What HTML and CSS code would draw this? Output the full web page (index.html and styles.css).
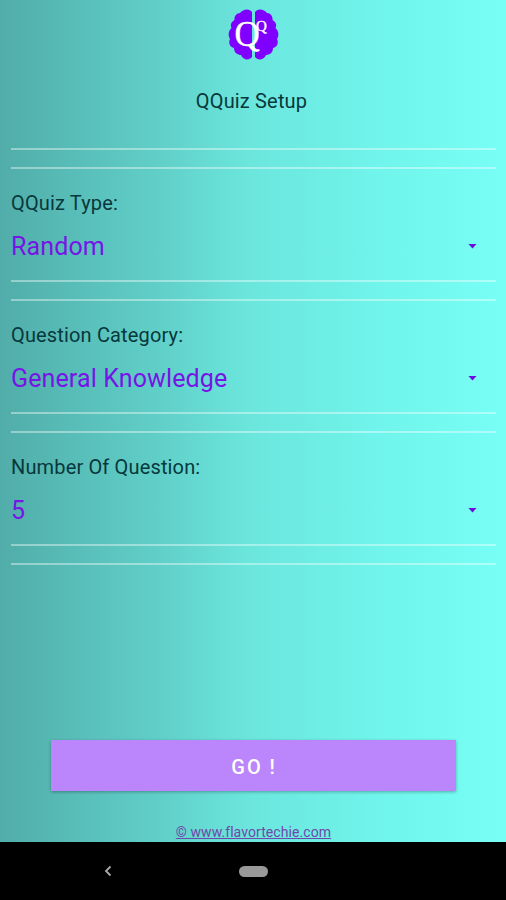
FILE: index.html
```
<!DOCTYPE html>
<html lang="en">
<head>
    <meta charset="UTF-8">
    <meta name="viewport" content="width=device-width, initial-scale=1.0">
    <title>QQuiz Setup</title>
    <link rel="stylesheet" href="styles.css">
</head>
<body>
    <div class="screen">
        <header class="header">
            <svg class="logo" viewBox="0 0 52 52">
                <g fill="#7f00ff">
                    <path d="M24 3 C21 -1 15 0 12 4 C8 4 6 8 6.500 11 C3 13 2 16 3.500 19 C0 22 0 27 2 30 C0 34 2 38 6 39 C6 44 10 46 13 46 C15 51 21 52 24 48 Z"/>
                    <path d="M27 3 C30 -1 36 0 39 4 C43 4 45 8 44.500 11 C48 13 49 16 47.500 19 C51 22 51 27 49 30 C51 34 49 38 45 39 C45 44 41 46 38 46 C36 51 30 52 27 48 Z"/>
                </g>
                <text class="logo-big" x="6.500" y="37">Q</text>
                <text class="logo-small" x="28" y="21.500">Q</text>
            </svg>
            <h1 class="title">QQuiz Setup</h1>
        </header>

        <main class="form">
            <div class="divider"></div>
            <div class="field">
                <div class="label">QQuiz Type:</div>
                <div class="select"><span>Random</span><i class="arrow"></i></div>
            </div>
            <div class="divider"></div>
            <div class="field">
                <div class="label">Question Category:</div>
                <div class="select"><span>General Knowledge</span><i class="arrow"></i></div>
            </div>
            <div class="divider"></div>
            <div class="field">
                <div class="label">Number Of Question:</div>
                <div class="select"><span>5</span><i class="arrow"></i></div>
            </div>
            <div class="divider"></div>
        </main>

        <button class="go-btn">GO !</button>
        <footer class="footer"><a href="#">© www.flavortechie.com</a></footer>
    </div>

    <nav class="navbar">
        <svg class="back" viewBox="0 0 8 12"><path d="M6.500 1.500 L2 6 L6.500 10.500"/></svg>
        <div class="home"></div>
    </nav>
</body>
</html>
```
FILE: styles.css
```
* {
    box-sizing: border-box;
}
body {
    margin: 0;
    height: 900px;
    display: flex;
    flex-direction: column;
    overflow: hidden;
    font-family: Roboto, "Liberation Sans", sans-serif;
    color: #08383c;
}
.screen {
    height: 842px;
    display: flex;
    flex-direction: column;
    background: linear-gradient(to right, #51ada9, #61d1ca 33%, #6be6dd 49%, #70f4eb 75%, #78fff5);
}
.header {
    height: 148px;
    padding-top: 9px;
    display: flex;
    flex-direction: column;
    align-items: center;
}
.logo {
    width: 52px;
    height: 52px;
    margin-left: 2px;
}
.logo text {
    font-family: "Liberation Serif", serif;
    fill: #fff;
    stroke: #fff;
    stroke-width: 0.4;
}
.logo-big {
    font-size: 35px;
}
.logo-small {
    font-size: 15px;
}
.title {
    margin: 28px 0 0;
    padding-right: 3px;
    font-size: 20px;
    line-height: 24px;
    font-weight: 400;
    letter-spacing: 0.17px;
}
.form {
    padding: 0 10px 0 11px;
}
.divider {
    height: 21px;
    border-top: 2px solid rgba(255, 255, 255, 0.4);
    border-bottom: 2px solid rgba(255, 255, 255, 0.4);
}
.field {
    height: 111px;
    padding-top: 22px;
}
.label {
    font-size: 20px;
    line-height: 24px;
    letter-spacing: 0.15px;
}
.select {
    margin-top: 16px;
    padding-right: 19px;
    display: flex;
    align-items: center;
    justify-content: space-between;
    font-size: 25px;
    line-height: 32px;
    letter-spacing: 0.13px;
    color: #7714e6;
}
.arrow {
    width: 9px;
    height: 5px;
    margin-bottom: 2px;
    background: #6a0fe0;
    clip-path: polygon(0 0, 100% 0, 50% 100%);
}
.go-btn {
    width: 405px;
    height: 51px;
    margin: 175px 0 0 51px;
    padding: 2px 0 0 1px;
    border: none;
    background: #bb86fc;
    color: #fff;
    font-family: inherit;
    font-size: 20px;
    font-weight: 500;
    letter-spacing: 1.9px;
    box-shadow: 0 1px 3px rgba(0, 0, 0, 0.3);
}
.footer {
    margin-top: 32px;
    padding-left: 1px;
    text-align: center;
    font-size: 14px;
    line-height: 18px;
    letter-spacing: 0.08px;
}
.footer a {
    color: #7048a8;
}
.navbar {
    height: 58px;
    display: grid;
    grid-template-columns: 1fr 29px 1fr;
    align-items: center;
    background: #000;
}
.back {
    width: 8px;
    height: 12px;
    margin-left: 104px;
    fill: none;
    stroke: #aaa;
    stroke-width: 1.8;
}
.home {
    height: 11px;
    border-radius: 6px;
    background: #999;
}
```
